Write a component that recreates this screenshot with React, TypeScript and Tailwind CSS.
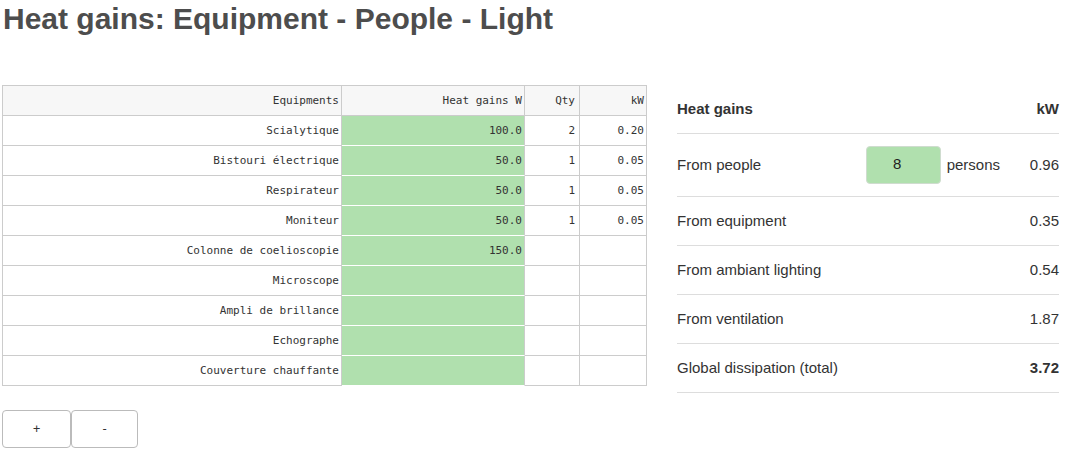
import React from "react";

const rows: { name: string; w?: string; q?: string; kw?: string }[] = [
  { name: "Scialytique", w: "100.0", q: "2", kw: "0.20" },
  { name: "Bistouri électrique", w: "50.0", q: "1", kw: "0.05" },
  { name: "Respirateur", w: "50.0", q: "1", kw: "0.05" },
  { name: "Moniteur", w: "50.0", q: "1", kw: "0.05" },
  { name: "Colonne de coelioscopie", w: "150.0" },
  { name: "Microscope" },
  { name: "Ampli de brillance" },
  { name: "Echographe" },
  { name: "Couverture chauffante" },
];

const mono = { fontFamily: "'DejaVu Sans Mono', monospace" };

export default function App() {
  return (
    <div
      className="w-[1068px] h-[453px] bg-white text-[#333] pl-[2px] pt-[2px] overflow-hidden"
      style={{ fontFamily: "'Liberation Sans', Arial, sans-serif" }}
    >
      <h1 className="text-[30px] leading-[33px] font-bold text-[#4d4d4d] pl-[1px]">
        Heat gains: Equipment - People - Light
      </h1>
      <div className="flex mt-[50px]">
        <div className="w-[645px]">
          <div
            className="grid grid-cols-[339px_183px_55px_67px] border-l border-t border-[#ccc] text-[11px] text-[#333] w-[645px]"
            style={mono}
          >
            <div className="h-[30px] border-r border-b border-[#ccc] bg-[#f7f7f7] flex items-center justify-end pr-[2px] pt-[1px]">Equipments</div>
            <div className="h-[30px] border-r border-b border-[#ccc] bg-[#f7f7f7] flex items-center justify-end pr-[2px] pt-[1px]">Heat gains W</div>
            <div className="h-[30px] border-r border-b border-[#ccc] bg-[#f7f7f7] flex items-center justify-end pr-[4px] pt-[1px]">Qty</div>
            <div className="h-[30px] border-r border-b border-[#ccc] bg-[#f7f7f7] flex items-center justify-end pr-[2px] pt-[1px]">kW</div>
            {rows.map((r) => (
              <React.Fragment key={r.name}>
                <div className="h-[30px] border-r border-b border-[#ccc] flex items-center justify-end pr-[2px] pt-[1px]">{r.name}</div>
                <div className="h-[30px] border-r border-b border-r-[#ccc] border-b-white bg-[#b0e0ae] flex items-center justify-end pr-[2px] pt-[1px]">{r.w ?? ""}</div>
                <div className="h-[30px] border-r border-b border-[#ccc] flex items-center justify-end pr-[4px] pt-[1px]">{r.q ?? ""}</div>
                <div className="h-[30px] border-r border-b border-[#ccc] flex items-center justify-end pr-[2px] pt-[1px]">{r.kw ?? ""}</div>
              </React.Fragment>
            ))}
          </div>
          <div className="flex mt-[24px] text-[12px] text-[#333]" style={mono}>
            <button className="w-[69px] h-[38px] border border-[#bbb] rounded-[4px] bg-white flex items-center justify-center">+</button>
            <button className="w-[67px] h-[38px] border border-[#bbb] rounded-[4px] bg-white flex items-center justify-center">-</button>
          </div>
        </div>
        <div className="ml-[30px] w-[382px] text-[15px] text-[#333]">
          <div className="h-[49px] border-b border-[#ddd] flex items-center justify-between font-bold">
            <span>Heat gains</span>
            <span>kW</span>
          </div>
          <div className="h-[63px] border-b border-[#ddd] flex items-center">
            <span className="flex-1">From people</span>
            <div className="w-[75px] h-[38px] rounded-[4px] border border-[#cfdccf] bg-[#b0e0ae] flex items-center justify-center pr-[12px] text-[#222] mb-[1px]">8</div>
            <span className="ml-[6px]">persons</span>
            <span className="w-[59px] text-right">0.96</span>
          </div>
          {[
            ["From equipment", "0.35"],
            ["From ambiant lighting", "0.54"],
            ["From ventilation", "1.87"],
          ].map(([a, b]) => (
            <div key={a} className="h-[49px] border-b border-[#ddd] flex items-center justify-between">
              <span>{a}</span>
              <span>{b}</span>
            </div>
          ))}
          <div className="h-[49px] border-b border-[#ddd] flex items-center justify-between">
            <span>Global dissipation (total)</span>
            <span className="font-bold">3.72</span>
          </div>
        </div>
      </div>
    </div>
  );
}
